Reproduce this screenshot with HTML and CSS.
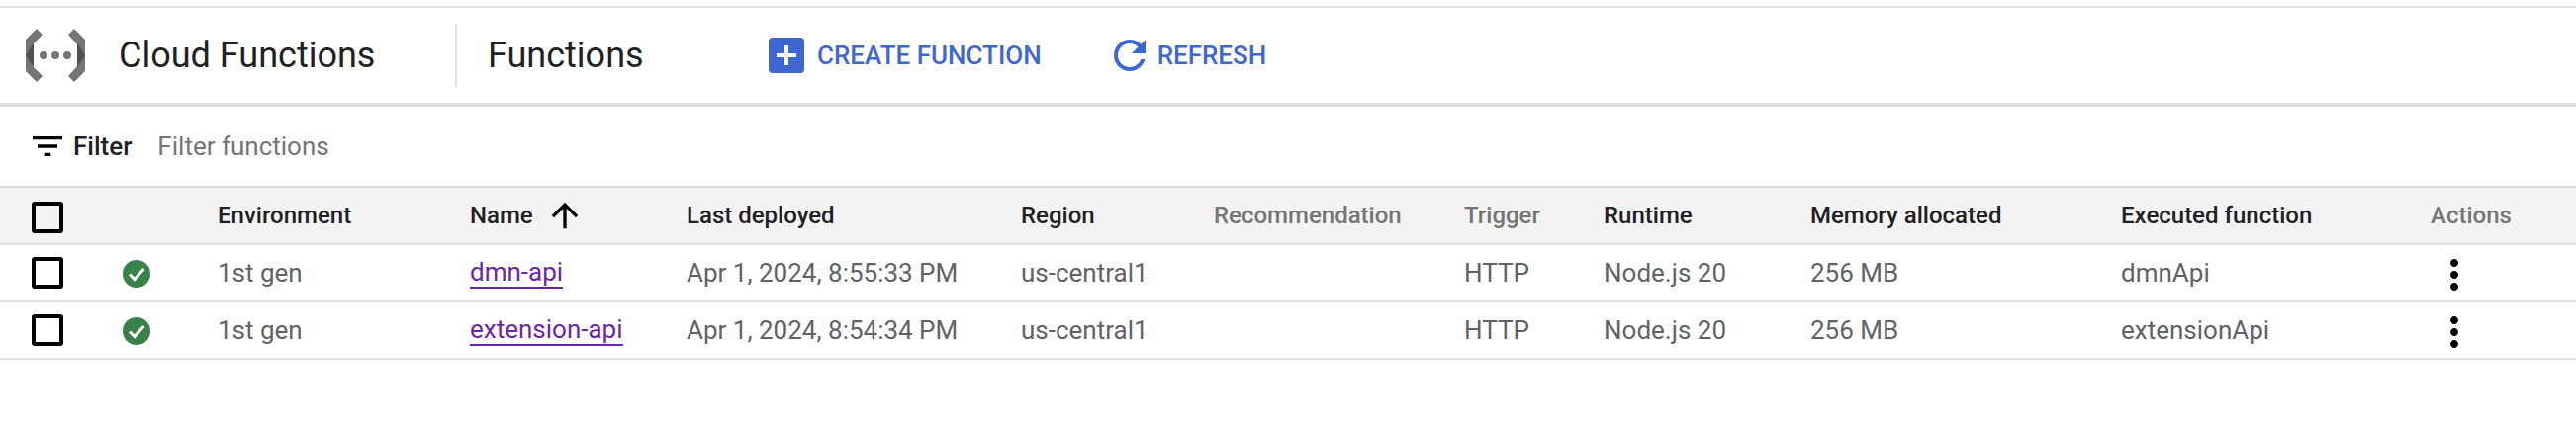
FILE: index.html

```html
<!DOCTYPE html>
<html lang="en">
<head>
  <meta charset="UTF-8">
  <title>Cloud Functions</title>
  <link rel="stylesheet" href="styles.css">
</head>
<body>
  <!-- Top toolbar -->
  <div class="toolbar">
    <svg class="logo" width="62" height="54" viewBox="0 0 62 54">
      <polygon fill="#757575" points="12,0 1,11 1,43 12,54 18,48 8,38 8,16 18,6"/>
      <polygon fill="#505050" points="9,14 9,39 1,27"/>
      <polygon fill="#757575" points="50,0 61,11 61,43 50,54 44,48 53,38 53,16 44,6"/>
      <polygon fill="#505050" points="53,14 53,39 61,27"/>
      <circle cx="19" cy="27" r="4" fill="#757575"/>
      <circle cx="31" cy="27" r="4" fill="#757575"/>
      <circle cx="43" cy="27" r="4" fill="#757575"/>
    </svg>
    <span class="product">Cloud Functions</span>
    <span class="page-title">Functions</span>
    <a class="action action-create">
      <svg width="36" height="36" viewBox="0 0 36 36">
        <rect width="36" height="36" rx="4" fill="#3f67d1"/>
        <path d="M16 8h4v8h8v4h-8v8h-4v-8H8v-4h8z" fill="#fff"/>
      </svg>
      CREATE FUNCTION
    </a>
    <a class="action action-refresh">
      <svg width="48" height="48" viewBox="0 0 24 24">
        <path fill="#3f67d1" d="M17.65 6.35C16.2 4.9 14.21 4 12 4c-4.42 0-7.99 3.58-7.99 8s3.57 8 7.99 8c3.73 0 6.84-2.55 7.73-6h-2.08c-.82 2.33-3.04 4-5.65 4-3.31 0-6-2.69-6-6s2.69-6 6-6c1.66 0 3.14.69 4.22 1.78L13 11h7V4l-2.35 2.35z"/>
      </svg>
      REFRESH
    </a>
  </div>

  <!-- Filter -->
  <div class="filter-bar">
    <svg class="filter-icon" width="40" height="40" viewBox="0 0 24 24">
      <path d="M10 18h4v-2h-4v2zM3 6v2h18V6H3zm3 7h12v-2H6v2z"/>
    </svg>
    <span class="filter-label">Filter</span>
    <span class="filter-hint">Filter functions</span>
  </div>

  <!-- Table -->
  <div class="table">
    <div class="row row-head">
      <div><span class="checkbox"></span></div>
      <div></div>
      <div>Environment</div>
      <div class="sorted">Name
        <svg width="40" height="40" viewBox="0 0 24 24"><path d="M4 12l1.41 1.41L11 7.83V20h2V7.83l5.58 5.59L20 12l-8-8-8 8z"/></svg>
      </div>
      <div>Last deployed</div>
      <div>Region</div>
      <div class="muted">Recommendation</div>
      <div class="muted">Trigger</div>
      <div>Runtime</div>
      <div>Memory allocated</div>
      <div>Executed function</div>
      <div class="muted">Actions</div>
    </div>

    <div class="row">
      <div><span class="checkbox"></span></div>
      <div>
        <svg class="status" width="28" height="28" viewBox="0 0 28 28">
          <circle cx="14" cy="14" r="14" fill="#3a8049"/>
          <path d="M7 14.5l5 5 9.5-10.5" fill="none" stroke="#fff" stroke-width="3"/>
        </svg>
      </div>
      <div>1st gen</div>
      <div><a class="fn-link">dmn-api</a></div>
      <div>Apr 1, 2024, 8:55:33 PM</div>
      <div>us-central1</div>
      <div></div>
      <div>HTTP</div>
      <div>Node.js 20</div>
      <div>256 MB</div>
      <div>dmnApi</div>
      <div>
        <svg class="more" width="48" height="48" viewBox="0 0 24 24">
          <path d="M12 8c1.1 0 2-.9 2-2s-.9-2-2-2-2 .9-2 2 .9 2 2 2zm0 2c-1.1 0-2 .9-2 2s.9 2 2 2 2-.9 2-2-.9-2-2-2zm0 6c-1.1 0-2 .9-2 2s.9 2 2 2 2-.9 2-2-.9-2-2-2z"/>
        </svg>
      </div>
    </div>

    <div class="row">
      <div><span class="checkbox"></span></div>
      <div>
        <svg class="status" width="28" height="28" viewBox="0 0 28 28">
          <circle cx="14" cy="14" r="14" fill="#3a8049"/>
          <path d="M7 14.5l5 5 9.5-10.5" fill="none" stroke="#fff" stroke-width="3"/>
        </svg>
      </div>
      <div>1st gen</div>
      <div><a class="fn-link">extension-api</a></div>
      <div>Apr 1, 2024, 8:54:34 PM</div>
      <div>us-central1</div>
      <div></div>
      <div>HTTP</div>
      <div>Node.js 20</div>
      <div>256 MB</div>
      <div>extensionApi</div>
      <div>
        <svg class="more" width="48" height="48" viewBox="0 0 24 24">
          <path d="M12 8c1.1 0 2-.9 2-2s-.9-2-2-2-2 .9-2 2 .9 2 2 2zm0 2c-1.1 0-2 .9-2 2s.9 2 2 2 2-.9 2-2-.9-2-2-2zm0 6c-1.1 0-2 .9-2 2s.9 2 2 2 2-.9 2-2-.9-2-2-2z"/>
        </svg>
      </div>
    </div>
  </div>
</body>
</html>
```

FILE: styles.css

```css
body {
  margin: 0;
  padding-top: 6px;
  background: #fff;
  color: #5f6368;
  font-family: Roboto, "Liberation Sans", sans-serif;
  font-size: 26px;
}

.toolbar {
  display: flex;
  align-items: center;
  height: 96px;
  border-top: 2px solid #e0e0e0;
  border-bottom: 4px solid #e0e0e0;
  padding-left: 25px;
  color: #202124;
}

.logo {
  flex: none;
}

.product {
  margin-left: 33px;
  width: 340px;
  font-size: 36px;
}

.page-title {
  display: flex;
  align-items: center;
  height: 64px;
  border-left: 2px solid #e0e0e0;
  padding-left: 31px;
  width: 284px;
  font-size: 36px;
}

.action {
  display: flex;
  align-items: center;
  color: #3f67d1;
  font-weight: 500;
}

.action-create svg {
  margin-right: 13px;
}

.action-refresh {
  margin-left: 65px;
}

.action-refresh svg {
  margin-right: 4px;
}

.filter-bar {
  display: flex;
  align-items: center;
  height: 80px;
  border-bottom: 2px solid #e0e0e0;
  padding-left: 28px;
}

.filter-label {
  margin-left: 6px;
  color: #202124;
  font-weight: 500;
}

.filter-hint {
  margin-left: 26px;
  color: #757575;
}

.row {
  display: grid;
  grid-template-columns: 92px 96px 255px 219px 338px 195px 253px 141px 209px 314px 313px 1fr;
  align-items: center;
  height: 56px;
  border-bottom: 2px solid #e0e0e0;
  padding-left: 32px;
}

.row > div {
  display: flex;
  align-items: center;
  white-space: nowrap;
}

.row-head {
  background: #f3f3f3;
  color: #202124;
  font-size: 24px;
  font-weight: 500;
}

.row-head .muted {
  color: #757575;
}

.row-head .checkbox {
  margin-top: 4px;
}

.sorted svg {
  margin-left: 12px;
}

.checkbox {
  display: block;
  box-sizing: border-box;
  width: 32px;
  height: 32px;
  border: 4px solid #000;
  border-radius: 3px;
}

.status {
  margin-top: 2px;
}

.fn-link {
  color: #6a27a5;
  border-bottom: 2px solid #6a27a5;
  line-height: 30px;
}

.more {
  margin-top: 3px;
}
```
